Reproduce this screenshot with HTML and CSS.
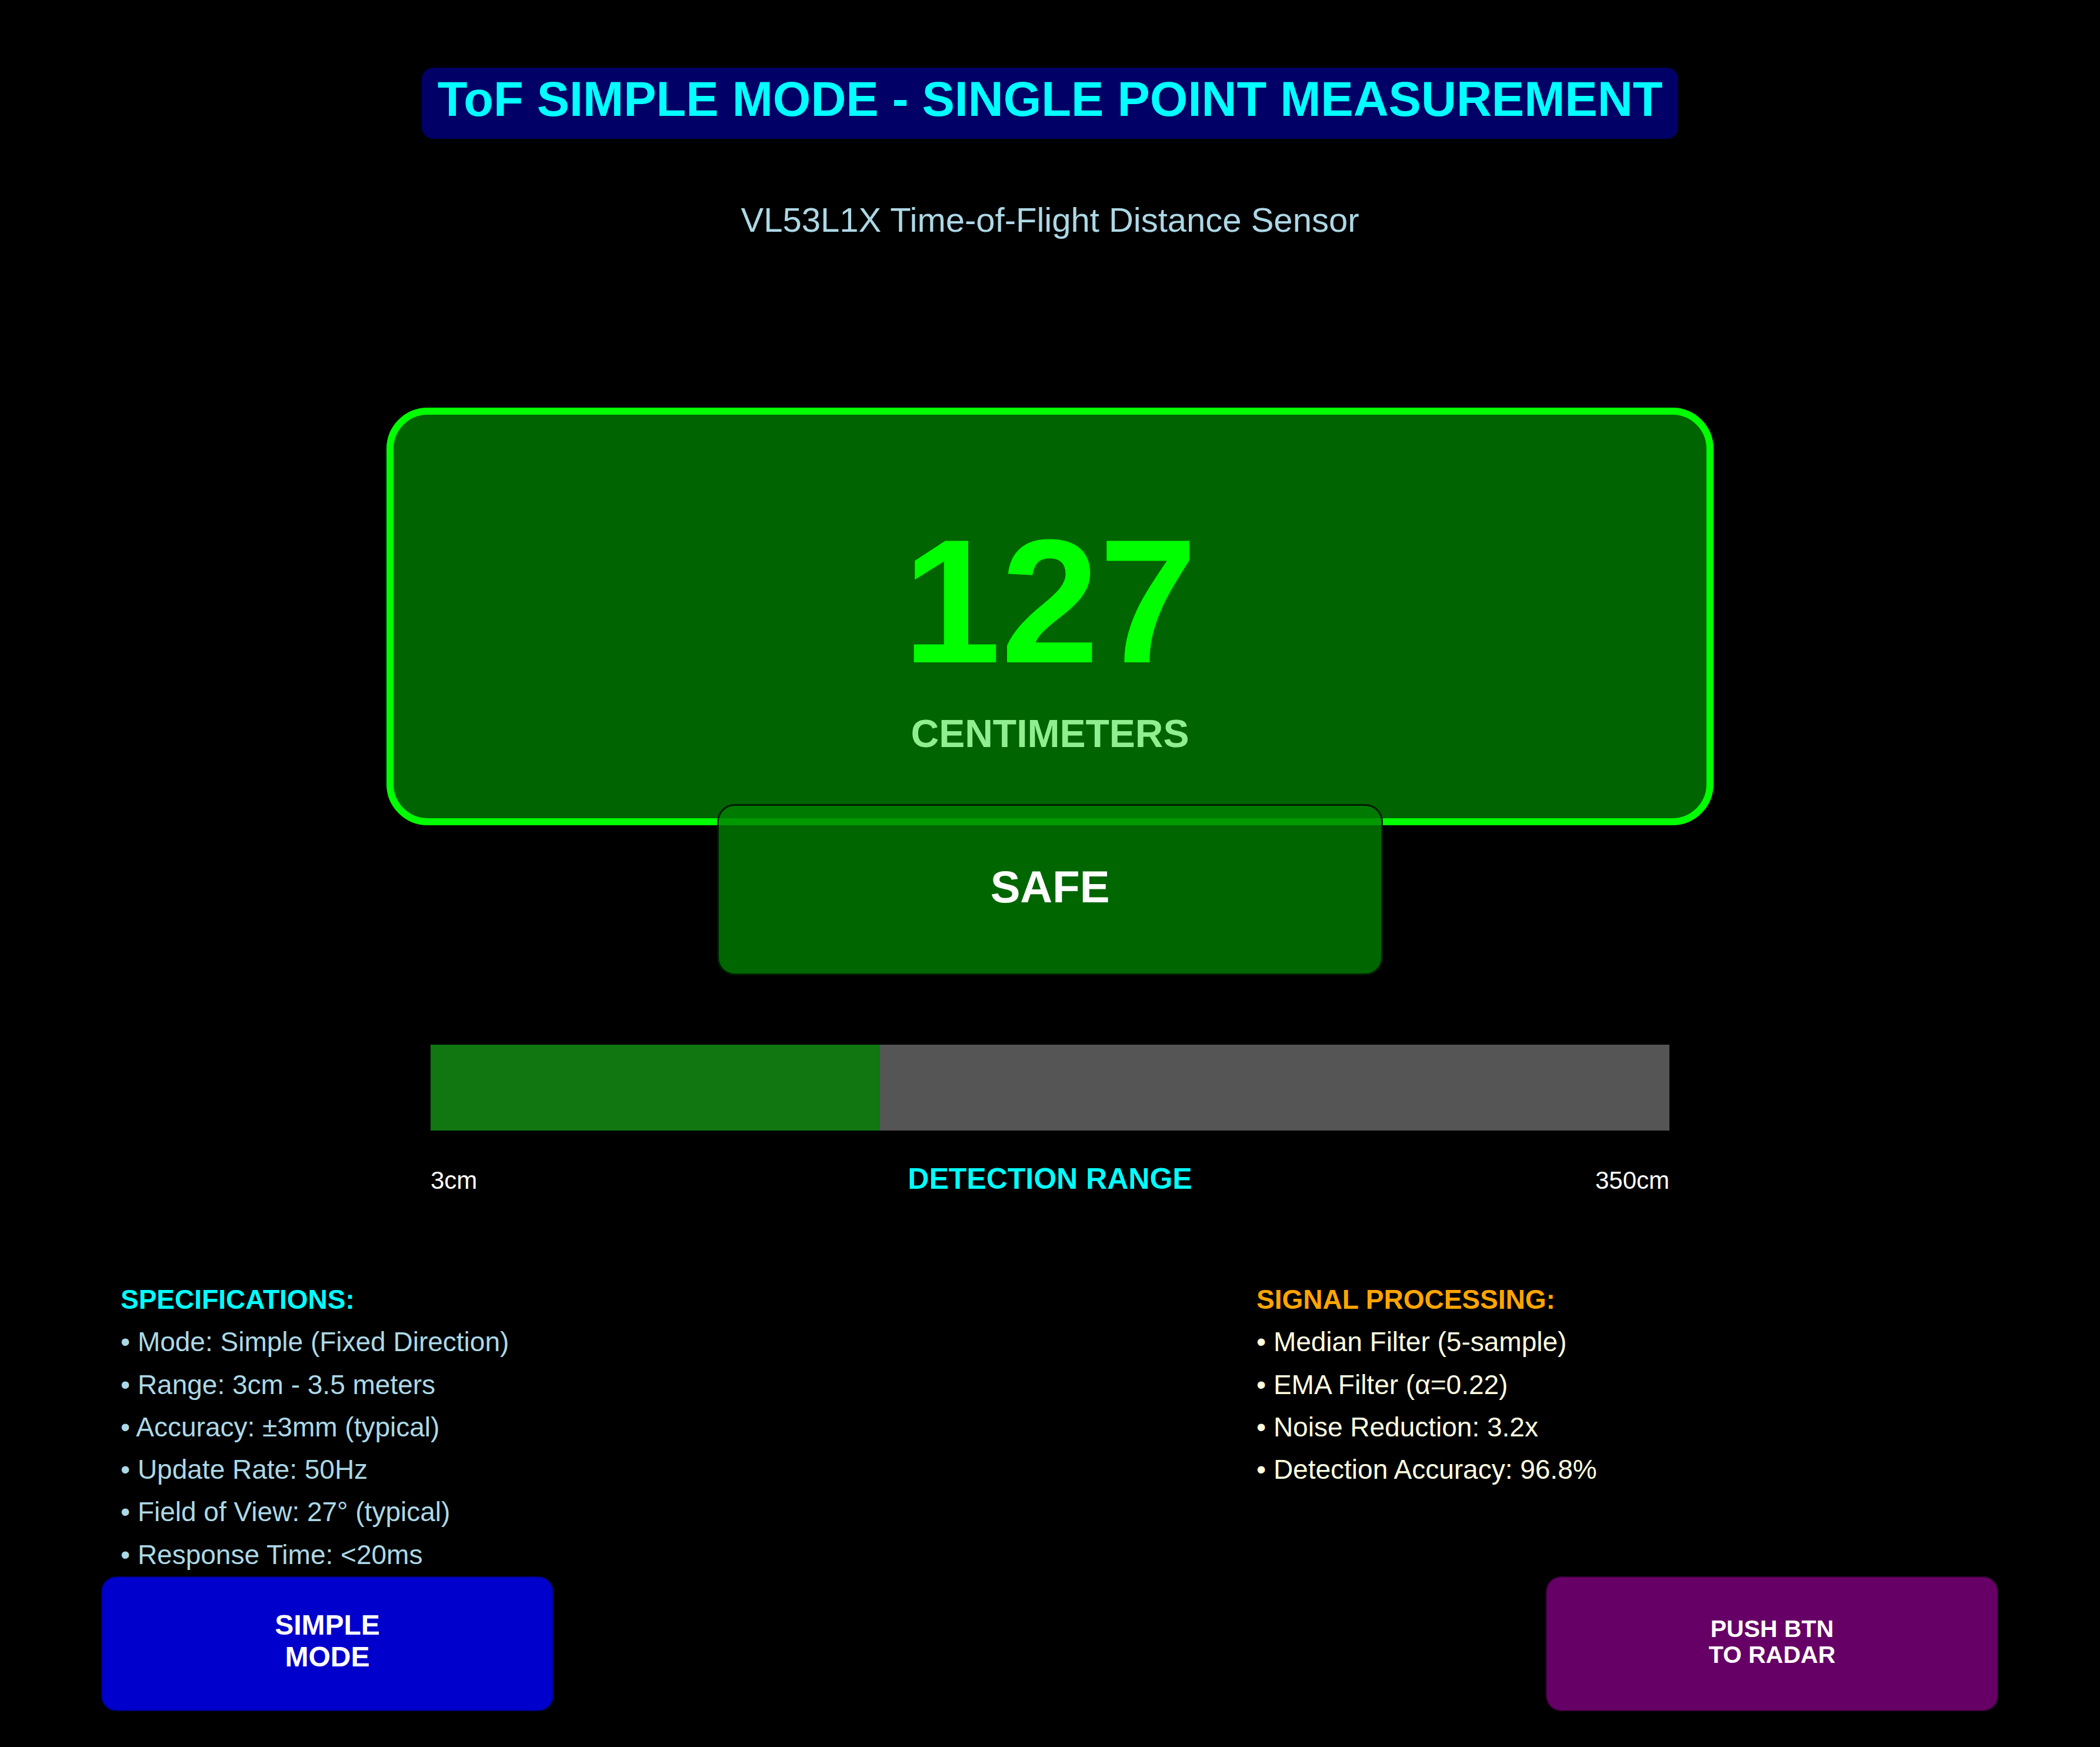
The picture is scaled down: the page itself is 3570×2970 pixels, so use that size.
FILE: index.html
```html
<!DOCTYPE html>
<html lang="en">
<head>
<meta charset="utf-8">
<title>ToF Simple Mode</title>
<link rel="stylesheet" href="styles.css">
</head>
<body>
<main class="screen">
  <h1 class="title">ToF SIMPLE MODE - SINGLE POINT MEASUREMENT</h1>
  <p class="subtitle">VL53L1X Time-of-Flight Distance Sensor</p>

  <section class="reading">
    <div class="value">127</div>
    <div class="unit">CENTIMETERS</div>
  </section>
  <div class="status">SAFE</div>

  <div class="range">
    <div class="bar"><div class="bar-fill" style="width:36.29%"></div></div>
    <div class="range-labels">
      <span class="range-edge">3cm</span>
      <span class="range-title">DETECTION RANGE</span>
      <span class="range-edge end">350cm</span>
    </div>
  </div>

  <section class="info">
    <div class="col specs">
      <h2>SPECIFICATIONS:</h2>
      <ul>
        <li>• Mode: Simple (Fixed Direction)</li>
        <li>• Range: 3cm - 3.5 meters</li>
        <li>• Accuracy: ±3mm (typical)</li>
        <li>• Update Rate: 50Hz</li>
        <li>• Field of View: 27° (typical)</li>
        <li>• Response Time: &lt;20ms</li>
      </ul>
    </div>
    <div class="col processing">
      <h2>SIGNAL PROCESSING:</h2>
      <ul>
        <li>• Median Filter (5-sample)</li>
        <li>• EMA Filter (α=0.22)</li>
        <li>• Noise Reduction: 3.2x</li>
        <li>• Detection Accuracy: 96.8%</li>
      </ul>
    </div>
  </section>

  <div class="buttons">
    <div class="btn btn-mode">SIMPLE<br>MODE</div>
    <div class="btn btn-radar">PUSH BTN<br>TO RADAR</div>
  </div>
</main>
</body>
</html>
```
FILE: styles.css
```css
html, body {
  margin: 0;
  padding: 0;
  background: #000;
}

.screen {
  width: 3570px;
  height: 2970px;
  box-sizing: border-box;
  padding-top: 115px;
  display: flex;
  flex-direction: column;
  align-items: center;
  font-family: "Liberation Sans", Arial, sans-serif;
  background: #000;
  overflow: hidden;
}

.title {
  margin: 0;
  width: 2136px;
  height: 121px;
  box-sizing: border-box;
  padding-top: 12px;
  background: #000066;
  border-radius: 20px;
  color: #00ffff;
  font-size: 83px;
  line-height: 84px;
  font-weight: bold;
  text-align: center;
  white-space: nowrap;
}

.subtitle {
  margin: 109px 0 0;
  font-size: 58px;
  line-height: 58px;
  color: #add8e6;
}

.reading {
  margin-top: 290px;
  width: 2256px;
  height: 710px;
  box-sizing: border-box;
  border: 12px solid #00ff00;
  border-radius: 70px;
  background: #006400;
  padding-top: 167px;
  display: flex;
  flex-direction: column;
  align-items: center;
}

.value {
  font-size: 300px;
  line-height: 300px;
  font-weight: bold;
  color: #00ff00;
}

.unit {
  margin-top: 42px;
  font-size: 66px;
  line-height: 66px;
  font-weight: bold;
  color: #90ee90;
}

.status {
  position: relative;
  margin-top: -36px;
  width: 1132px;
  height: 291px;
  box-sizing: border-box;
  border: 3px solid #001c00;
  border-radius: 30px;
  background: rgba(0, 128, 0, 0.8);
  padding-top: 100px;
  text-align: center;
  color: #ffffff;
  font-size: 76px;
  line-height: 76px;
  font-weight: bold;
}

.range {
  margin-top: 118px;
  width: 2106px;
}

.bar {
  height: 146px;
  background: #555555;
  display: flex;
}

.bar-fill {
  height: 100%;
  background: #117711;
}

.range-labels {
  margin-top: 57px;
  display: grid;
  grid-template-columns: 1fr auto 1fr;
  align-items: baseline;
  line-height: 1;
}

.range-edge {
  font-size: 42px;
  color: #ffffff;
}

.range-edge.end {
  justify-self: end;
}

.range-title {
  font-size: 50px;
  font-weight: bold;
  color: #00ffff;
}

.info {
  align-self: stretch;
  margin-top: 144px;
  padding-left: 205px;
  display: grid;
  grid-template-columns: 1931px auto;
  font-size: 46px;
  line-height: 72.3px;
}

.info h2 {
  margin: 0;
  font-size: 46px;
  font-weight: bold;
}

.info ul {
  margin: 0;
  padding: 0;
  list-style: none;
}

.specs h2 { color: #00ffff; }
.specs li { color: #add8e6; }
.processing h2 { color: #ffa500; }
.processing li { color: #ffffe0; }

.buttons {
  align-self: stretch;
  margin-top: 1px;
  padding: 0 173px 0 172px;
  display: flex;
  justify-content: space-between;
}

.btn {
  width: 769px;
  height: 229px;
  box-sizing: border-box;
  border: 2px solid rgba(0, 0, 0, 0.35);
  border-radius: 26px;
  color: #ffffff;
  font-weight: bold;
  text-align: center;
}

.btn-mode {
  background: #0000cc;
  font-size: 48px;
  line-height: 54px;
  padding-top: 54px;
}

.btn-radar {
  background: #660066;
  font-size: 41px;
  line-height: 44px;
  padding-top: 65px;
}
```
